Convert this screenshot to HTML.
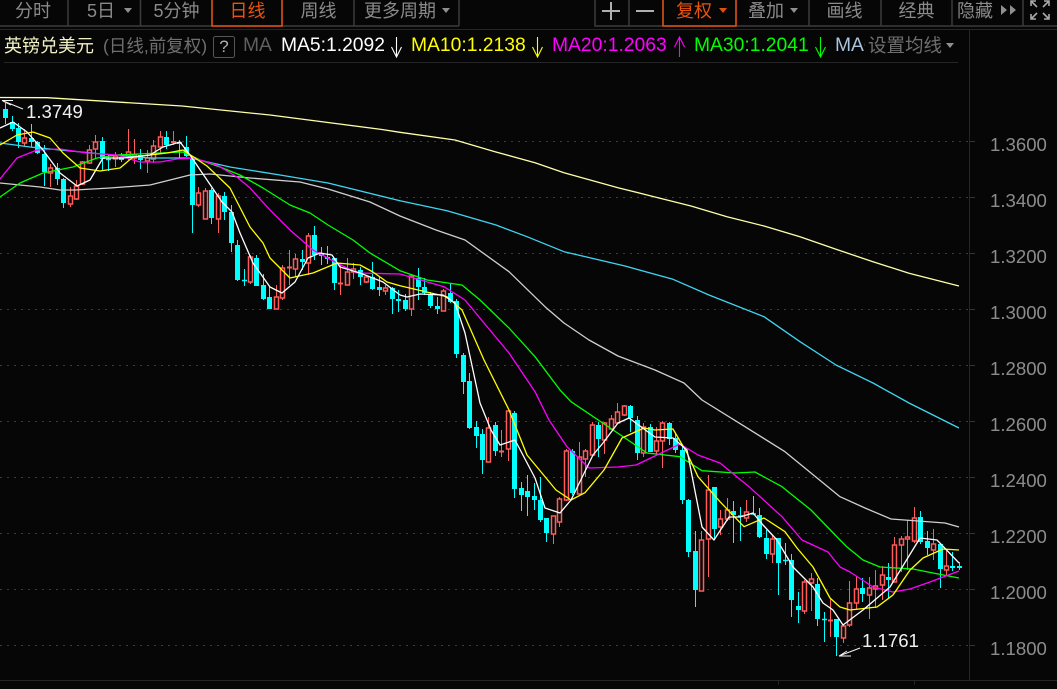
<!DOCTYPE html>
<html><head><meta charset="utf-8"><style>
html,body{margin:0;padding:0;background:#060606;width:1057px;height:689px;overflow:hidden}
body{position:relative;font-family:"Liberation Sans","Noto Sans CJK SC",sans-serif}
.t{position:absolute;white-space:nowrap;line-height:24px;height:24px}
.b{top:-1px;font-size:18px;color:#8a8a8a;text-align:center}
.r{top:34px;font-size:19.3px}
.p{left:990px;font-size:18.6px;color:#8c8c8c}
svg{position:absolute;left:0;top:0}
</style></head><body>
<svg width="1057" height="689" viewBox="0 0 1057 689">
<!-- toolbar frame -->
<path fill="none" stroke="#3c3c3c" stroke-width="1.5" d="M0 26H459M68 0V26M140.500 0V26M212 0V26M282 0V26M354 0V26M459 0V26M595 0V26H1057M629 0V26M663 0V26M736 0V26M809 0V26M881 0V26M952 0V26M1023 0V26"/>
<path fill="none" stroke="#e2500c" stroke-width="1.500" d="M212 0V26H282V0M663 0V26H736V0"/>
<path fill="none" stroke="#2a2a2a" stroke-width="1" d="M953 25.500H1022"/>
<path fill="none" stroke="#262626" stroke-width="1" d="M0 29.500H1057M4 62.500H958M969.500 30V680M0 680.500H1057M778.500 680V685M914.500 680V685"/>
<!-- grid -->
<g stroke="#3a3a3a" stroke-width="1" stroke-dasharray="2 5" fill="none">
<path d="M0 141.500H969M0 197.500H969M0 253.500H969M0 309.500H969M0 365.500H969M0 421.500H969M0 477.500H969M0 533.500H969M0 589.500H969M0 645.500H969"/>
</g>
<path stroke="#333" d="M970 141.500h5M970 197.500h5M970 253.500h5M970 309.500h5M970 365.500h5M970 421.500h5M970 477.500h5M970 533.500h5M970 589.500h5M970 645.500h5"/>
<!-- red wicks -->
<path fill="none" stroke="#ff5c5c" stroke-width="1" shape-rendering="crispEdges" d="M24.500 129V146M50.500 164V187M70.500 187V207M76.500 180V200M82.500 161V185M89.500 145V164M95.500 135V158M115.500 152V167M128.500 129V160M134.500 139V164M147.500 150V173M153.500 140V163M160.500 131V153M173.500 131V145M198.500 187V207M205.500 188V219M218.500 193V233M250.500 255V284M276.500 285V309M282.500 265V300M289.500 250V285M295.500 254V277M308.500 233V275M340.500 265V295M347.500 258V285M353.500 263V279M366.500 275V283M385.500 285V295M411.500 275V316M443.500 289V311M488.500 417V462M501.500 430V457M508.500 411V461M553.500 516V544M559.500 497V527M566.500 449V501M579.500 442V494M585.500 449V477M592.500 422V456M604.500 422V454M611.500 415V430M617.500 403V423M624.500 405V416M643.500 423V457M656.500 427V455M662.500 421V468M701.500 531V591M708.500 475V577M720.500 510V535M727.500 498V521M746.500 500V522M772.500 535V563M804.500 580V614M811.500 573V611M830.500 598V637M843.500 625V643M849.500 581V627M856.500 576V609M869.500 577V619M875.500 570V608M882.500 566V600M894.500 537V582M901.500 536V572M907.500 520V570M914.500 507V543M933.500 529V560M946.500 549V575"/>
<!-- red bodies -->
<path fill="#060606" stroke="#ff5c5c" stroke-width="1.500" d="M22.500 138h4v5h-4zM48.500 168h4v5h-4zM68.500 196h4v8h-4zM74.500 186h4v13h-4zM80.500 162h4v22h-4zM87.500 150h4v13h-4zM93.500 142h4v7h-4zM113.500 156h4v3h-4zM126.500 152h4v4h-4zM132.500 155h4v3h-4zM145.500 158h4v3h-4zM151.500 146h4v13h-4zM158.500 137h4v10h-4zM196.500 193h4v12h-4zM203.500 191h4v28h-4zM216.500 196h4v23h-4zM248.500 257h4v25h-4zM274.500 297h4v12h-4zM280.500 268h4v30h-4zM293.500 259h4v10h-4zM306.500 236h4v27h-4zM345.500 272h4v13h-4zM351.500 269h4v3h-4zM364.500 277h4v5h-4zM383.500 288h4v3h-4zM409.500 276h4v33h-4zM441.500 291h4v20h-4zM486.500 428h4v34h-4zM506.500 411h4v38h-4zM551.500 516h4v18h-4zM557.500 499h4v23h-4zM564.500 451h4v49h-4zM577.500 457h4v37h-4zM583.500 451h4v8h-4zM590.500 425h4v30h-4zM602.500 423h4v17h-4zM609.500 419h4v10h-4zM615.500 412h4v11h-4zM622.500 406h4v9h-4zM641.500 427h4v26h-4zM654.500 441h4v10h-4zM660.500 423h4v18h-4zM699.500 540h4v51h-4zM706.500 490h4v49h-4zM718.500 519h4v8h-4zM725.500 510h4v9h-4zM744.500 512h4v6h-4zM770.500 539h4v15h-4zM802.500 582h4v29h-4zM809.500 579h4v4h-4zM841.500 626h4v12h-4zM847.500 603h4v22h-4zM854.500 589h4v14h-4zM867.500 588h4v7h-4zM873.500 586h4v3h-4zM880.500 575h4v10h-4zM892.500 545h4v37h-4zM899.500 539h4v6h-4zM905.500 537h4v2h-4zM912.500 518h4v23h-4zM931.500 544h4v6h-4zM944.500 566h4v4h-4z"/>
<!-- red doji -->
<path fill="none" stroke="#ff5c5c" stroke-width="2" d="M171 142H176M287 267.500H292M338 283.500H343M499 451.500H504M828 620.500H833"/>
<!-- cyan wicks -->
<path fill="none" stroke="#00ffff" stroke-width="1" shape-rendering="crispEdges" d="M5.500 103V124M12.500 116V131M18.500 123V148M31.500 124V147M37.500 141V154M44.500 145V186M57.500 163V185M63.500 178V208M102.500 137V170M108.500 155V171M121.500 153V162M140.500 149V169M166.500 131V149M179.500 140V158M186.500 136V157M192.500 157V233M211.500 188V224M224.500 192V220M231.500 205V252M237.500 240V281M244.500 269V286M256.500 255V286M263.500 274V300M269.500 287V309M302.500 250V270M314.500 226V260M321.500 247V265M327.500 246V264M334.500 258V290M360.500 267V285M372.500 262V290M379.500 277V296M392.500 287V314M398.500 290V312M405.500 294V311M418.500 268V300M424.500 278V295M430.500 292V308M437.500 297V314M450.500 284V303M456.500 299V358M463.500 353V394M469.500 373V429M476.500 421V448M482.500 429V474M495.500 422V456M514.500 411V498M521.500 482V511M527.500 475V516M534.500 483V510M540.500 477V522M546.500 518V542M572.500 449V495M598.500 422V457M630.500 405V432M637.500 416V460M650.500 424V452M669.500 422V445M675.500 433V453M682.500 445V504M688.500 499V557M695.500 531V607M714.500 487V540M733.500 501V543M740.500 507V541M753.500 496V513M759.500 508V538M766.500 530V559M778.500 538V595M785.500 543V565M791.500 554V617M798.500 592V623M817.500 578V626M824.500 612V642M836.500 619V656M862.500 578V602M888.500 563V598M920.500 511V544M927.500 531V555M940.500 543V588M952.500 552V571M959.500 562V570"/>
<!-- cyan bodies -->
<path fill="none" stroke="#00ffff" stroke-width="5" shape-rendering="crispEdges" d="M5.500 109V118M12.500 122V129M18.500 128V142M31.500 138V142M37.500 142V153M44.500 154V172M57.500 168V179M63.500 179V203M102.500 141V159M121.500 157V160M140.500 155V160M166.500 137V145M179.500 142V144M186.500 147V156M192.500 159V205M211.500 190V218M224.500 196V212M231.500 212V243M237.500 245V280M256.500 258V286M263.500 285V299M269.500 297V309M302.500 259V262M314.500 235V255M321.500 253V256M327.500 257V259M334.500 258V283M360.500 270V277M372.500 277V289M379.500 287V290M392.500 288V299M398.500 299V301M405.500 300V309M418.500 278V287M424.500 287V293M430.500 295V306M437.500 306V309M450.500 293V302M456.500 301V354M463.500 355V382M469.500 381V428M476.500 427V436M482.500 434V460M495.500 425V451M514.500 413V489M521.500 488V495M527.500 491V497M534.500 496V500M540.500 500V520M546.500 518V533M572.500 451V493M598.500 425V439M630.500 406V418M637.500 420V453M650.500 427V452M669.500 423V439M675.500 438V450M682.500 450V500M688.500 500V552M695.500 551V590M714.500 487V529M733.500 511V515M759.500 515V537M766.500 538V554M778.500 538V563M791.500 560V600M798.500 606V610M817.500 584V619M836.500 619V637M862.500 588V594M888.500 577V580M920.500 517V542M927.500 541V548M940.500 544V569M952.500 566V568M959.500 566V568"/>
<path fill="none" stroke="#00ffff" stroke-width="1.500" d="M106 159.500H111M242 280.500H247M738 516H743M751 514H756M783 560.500H788M822 619.500H827"/>
<!-- MA lines -->
<g fill="none" stroke-width="1.300" stroke-linejoin="round">
<polyline stroke="#ffffa8" points="0,97.500 47,97.700 182,106 270,115 382,129.500 400,132.300 455,140 495,151.700 535,162.700 564,172.700 618,187.700 655,197 691,206 727,216.700 764,226 800,236.700 836,249.300 873,261.700 909,273.300 959,286"/>
<polyline stroke="#3fd5f2" points="0,143 30,147 60,150 113,155 150,158 190,158 230,167 280,175 328,183 400,200.700 447,210.700 496,225 527,236.700 564,251.700 625,266 673,279.300 709,295 764,316.700 800,341.700 836,365 873,383 909,403 959,428"/>
<polyline stroke="#cfcfcf" points="0,183 40,187 60,190 75,190 110,188 150,185 190,175 210,174 250,178 300,182 328,189 370,202 400,216 436,230 465,240 509,271.700 545,306.700 564,323 589,340 618,356 655,370 684,383 702,400 745,426.700 785,451.700 840,496.700 865,508 891,519 945,523 959,527"/>
<polyline stroke="#00ff00" points="0,197 20,183 43,173 73,167 97,158 117,155 160,153 183,152 200,160 220,167 240,175 263,188 290,205 310,213 328,225 353,240 370,253 400,270.700 427,280 462,285 480,300 509,328 535,356.700 560,390 571,401.700 625,438 647,453 680,456.700 702,470.700 735,473 755,472 782,486.700 811,510 840,540 847,547 863,560 880,567 913,569 933,573 959,578"/>
<polyline stroke="#ff00ff" points="0,179 17,158 37,150 60,149 87,153 117,155 140,162 160,162 177,159 193,158 217,165 237,177 250,188 270,210 290,230 313,250 337,263 357,273 400,274 444,286.700 465,300 484,323 509,353 535,391.700 549,420 567,446.700 589,468 618,467 636,465 680,444 698,455 720,463 749,486.700 782,516.700 802,540 828,552 840,567 850,572 873,587 893,592 910,589 930,582 959,571"/>
<polyline stroke="#ffff00" points="0,145 17,135 33,132 50,138 63,153 80,168 100,171 120,168 133,157 167,153 183,150 207,166 230,188 250,227 263,243 270,258 290,278 313,273 337,263 360,265 373,272 387,282 400,285.700 447,296.700 462,310 484,360 509,410 527,455 556,490 571,500 585,492.700 604,470 622,438 644,428 655,430 673,429 687,453 698,476.700 720,501.700 744,526.700 764,518 785,531.700 797,548 813,567 830,598 840,607 850,610 877,607 893,595 910,570 923,558 943,549 959,550"/>
<polyline stroke="#ffffff" points="0,128 13,122 27,132 43,150 60,173 77,186 90,180 103,158 123,158 133,157 150,155 163,147 180,142 190,155 207,180 222,202 232,212 240,233 253,263 270,287 282,293 295,282 308,258 320,253 332,255 340,267 360,273 383,282 400,295 407,297 420,294 443,295 455,303 465,333 480,403 491,430 500,445 515,440 535,478 545,508 560,513 571,500 593,455 603,443 618,423 629,418 655,437 673,438 687,450 702,527 714,540 729,517 740,517 753,513 763,525 777,540 793,567 813,587 823,603 833,610 843,625 863,610 890,587 920,538 937,540 959,563"/>
</g>
<!-- extremes -->
<path fill="none" stroke="#f0f0f0" stroke-width="1" d="M2 100.500H13M2 100.500L23 109M3 101L11 105M839 656H851M839 656L860 648M839 656L847 651"/>
<!-- header arrows -->
<g fill="none" stroke-width="1.100">
<path stroke="#fff" d="M396.500 37V57M391.500 47L396.500 57L401.500 47"/>
<path stroke="#ff0" d="M537.500 37V57M532.500 47L537.500 57L542.500 47"/>
<path stroke="#f0f" d="M679.500 37V57M674.500 47L679.500 37L684.500 47"/>
<path stroke="#0f0" d="M820.500 37V57M815.500 47L820.500 57L825.500 47"/>
</g>
<rect x="213.500" y="36.500" width="21" height="21" rx="2" fill="none" stroke="#555"/>
<!-- small triangles -->
<g fill="#8f8f8f">
<path d="M124 8h8l-4 5zM442 8h8l-4 5zM790 8h8l-4 5zM946 43h8l-4 5z"/>
<path d="M1001 5l6 5-6 5zM1010 5l6 5-6 5z"/>
</g>
<path fill="#e2500c" d="M719 8h8l-4 5z"/>
<!-- plus minus -->
<path stroke="#b0b0b0" stroke-width="2" fill="none" d="M602 11H620M611 2V20M636 11H654"/>
<!-- fullscreen icon -->
<g fill="none" stroke="#a8a8a8" stroke-width="1.600">
<path d="M1031 6V1H1036M1031 1L1037 7M1049 6V1H1044M1049 1L1043 7M1031 14V19H1036M1031 19L1037 13M1049 14V19H1044M1049 19L1043 13"/>
</g>
</svg>
<div class="t b" style="left:0;width:66px">分时</div>
<div class="t b" style="left:70px;width:62px">5日</div>
<div class="t b" style="left:141px;width:71px">5分钟</div>
<div class="t b" style="left:213px;width:69px;color:#e8540e">日线</div>
<div class="t b" style="left:283px;width:71px">周线</div>
<div class="t b" style="left:364px;width:72px">更多周期</div>
<div class="t b" style="left:664px;width:60px;color:#e8540e">复权</div>
<div class="t b" style="left:737px;width:58px">叠加</div>
<div class="t b" style="left:809px;width:71px">画线</div>
<div class="t b" style="left:881px;width:71px">经典</div>
<div class="t b" style="left:955px;width:40px;white-space:nowrap">隐藏</div>
<div class="t" style="left:4px;top:34px;font-size:18px;color:#f2f2c4">英镑兑美元</div>
<div class="t" style="left:103px;top:34px;font-size:17.500px;color:#6f6f6f">(日线,前复权)</div>
<div class="t" style="left:213px;top:35px;width:22px;text-align:center;font-size:17px;color:#b0b0b0">?</div>
<div class="t r" style="left:243px;color:#5f5f5f">MA</div>
<div class="t r" style="left:281px;color:#ffffff">MA5:1.2092</div>
<div class="t r" style="left:411px;color:#ffff00">MA10:1.2138</div>
<div class="t r" style="left:552px;color:#ff00ff">MA20:1.2063</div>
<div class="t r" style="left:694px;color:#00ff00">MA30:1.2041</div>
<div class="t r" style="left:835px;width:30px;overflow:hidden;color:#a9c4dc">MA60</div>
<div class="t" style="left:868px;top:34px;font-size:18.500px;color:#6f6f6f">设置均线</div>
<div class="t" style="left:26px;top:100px;font-size:18.600px;color:#f0f0f0">1.3749</div>
<div class="t" style="left:862px;top:629px;font-size:18.600px;color:#f0f0f0">1.1761</div>
<div class="t p" style="top:133px">1.3600</div>
<div class="t p" style="top:189px">1.3400</div>
<div class="t p" style="top:245px">1.3200</div>
<div class="t p" style="top:301px">1.3000</div>
<div class="t p" style="top:357px">1.2800</div>
<div class="t p" style="top:413px">1.2600</div>
<div class="t p" style="top:469px">1.2400</div>
<div class="t p" style="top:525px">1.2200</div>
<div class="t p" style="top:581px">1.2000</div>
<div class="t p" style="top:637px">1.1800</div>
</body></html>
